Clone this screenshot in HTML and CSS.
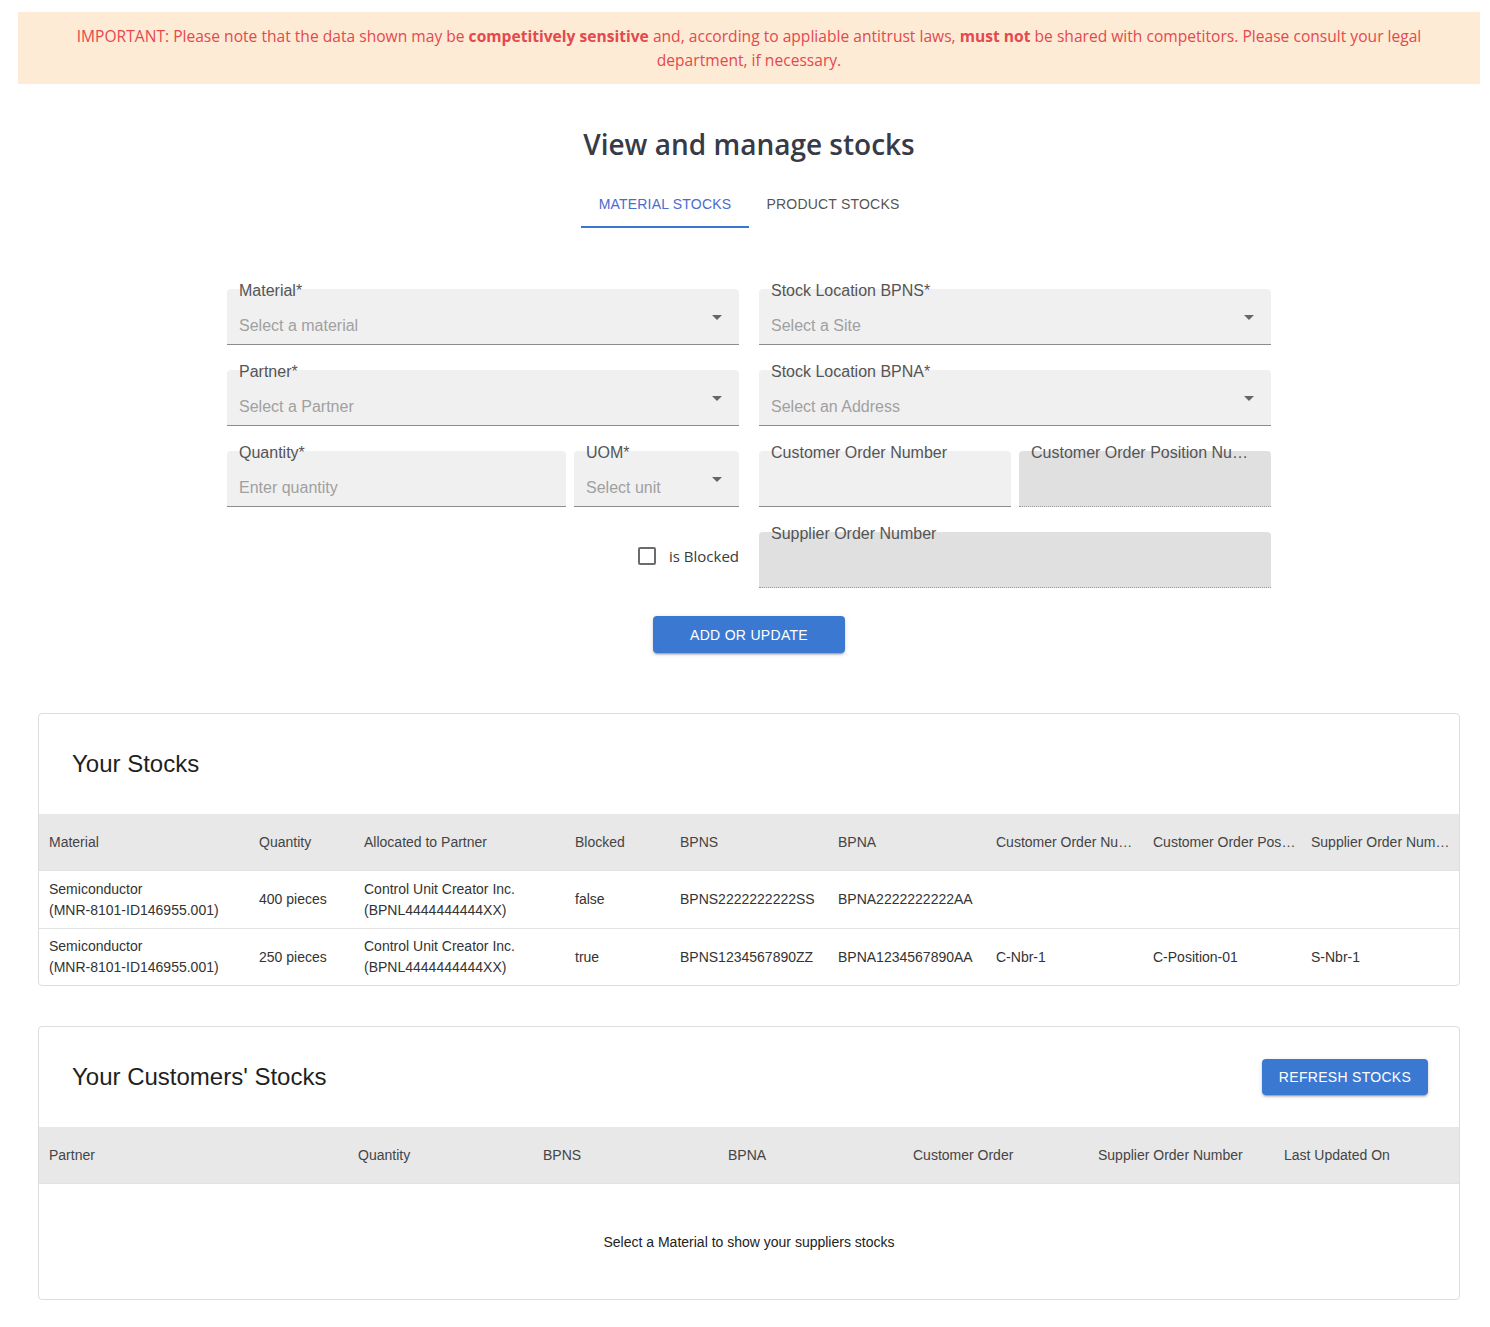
FILE: index.html
```html
<!DOCTYPE html>
<html lang="en">
<head>
<meta charset="utf-8">
<title>View and manage stocks</title>
<link rel="stylesheet" href="styles.css">
</head>
<body>
<div class="banner">IMPORTANT: Please note that the data shown may be <b>competitively sensitive</b> and, according to appliable antitrust laws, <b>must not</b> be shared with competitors. Please consult your legal department, if necessary.</div>

<main class="main">
  <h1 class="title">View and manage stocks</h1>
  <div class="tabs">
    <div class="tab active">MATERIAL STOCKS</div>
    <div class="tab">PRODUCT STOCKS</div>
  </div>

  <form class="form">
    <div class="col">
      <div class="field"><span class="label">Material*</span><span class="ph">Select a material</span><svg class="arrow" viewBox="0 0 24 24" width="24" height="24"><path d="M7 10l5 5 5-5z"/></svg></div>
      <div class="field"><span class="label">Partner*</span><span class="ph">Select a Partner</span><svg class="arrow" viewBox="0 0 24 24" width="24" height="24"><path d="M7 10l5 5 5-5z"/></svg></div>
      <div class="pair pair-qty">
        <div class="field"><span class="label">Quantity*</span><span class="ph">Enter quantity</span></div>
        <div class="field"><span class="label">UOM*</span><span class="ph">Select unit</span><svg class="arrow" viewBox="0 0 24 24" width="24" height="24"><path d="M7 10l5 5 5-5z"/></svg></div>
      </div>
      <div class="check-row"><span class="checkbox"></span><span class="check-label">is Blocked</span></div>
    </div>
    <div class="col">
      <div class="field"><span class="label">Stock Location BPNS*</span><span class="ph">Select a Site</span><svg class="arrow" viewBox="0 0 24 24" width="24" height="24"><path d="M7 10l5 5 5-5z"/></svg></div>
      <div class="field"><span class="label">Stock Location BPNA*</span><span class="ph">Select an Address</span><svg class="arrow" viewBox="0 0 24 24" width="24" height="24"><path d="M7 10l5 5 5-5z"/></svg></div>
      <div class="pair pair-order">
        <div class="field"><span class="label">Customer Order Number</span></div>
        <div class="field disabled"><span class="label">Customer Order Position Number</span></div>
      </div>
      <div class="field disabled"><span class="label">Supplier Order Number</span></div>
    </div>
  </form>

  <div class="actions"><button class="btn btn-add" type="button">ADD OR UPDATE</button></div>

  <section class="card">
    <div class="card-head"><h2 class="card-title">Your Stocks</h2></div>
    <div class="grid grid-stocks">
      <div class="row head">
        <div class="cell">Material</div>
        <div class="cell">Quantity</div>
        <div class="cell">Allocated to Partner</div>
        <div class="cell">Blocked</div>
        <div class="cell">BPNS</div>
        <div class="cell">BPNA</div>
        <div class="cell">Customer Order Number</div>
        <div class="cell">Customer Order Position</div>
        <div class="cell">Supplier Order Number</div>
      </div>
      <div class="row">
        <div class="cell"><span>Semiconductor</span><span>(MNR-8101-ID146955.001)</span></div>
        <div class="cell">400 pieces</div>
        <div class="cell"><span>Control Unit Creator Inc.</span><span>(BPNL4444444444XX)</span></div>
        <div class="cell">false</div>
        <div class="cell">BPNS2222222222SS</div>
        <div class="cell">BPNA2222222222AA</div>
        <div class="cell"></div>
        <div class="cell"></div>
        <div class="cell"></div>
      </div>
      <div class="row">
        <div class="cell"><span>Semiconductor</span><span>(MNR-8101-ID146955.001)</span></div>
        <div class="cell">250 pieces</div>
        <div class="cell"><span>Control Unit Creator Inc.</span><span>(BPNL4444444444XX)</span></div>
        <div class="cell">true</div>
        <div class="cell">BPNS1234567890ZZ</div>
        <div class="cell">BPNA1234567890AA</div>
        <div class="cell">C-Nbr-1</div>
        <div class="cell">C-Position-01</div>
        <div class="cell">S-Nbr-1</div>
      </div>
    </div>
  </section>

  <section class="card">
    <div class="card-head"><h2 class="card-title">Your Customers' Stocks</h2><button class="btn btn-refresh" type="button">REFRESH STOCKS</button></div>
    <div class="grid grid-customers">
      <div class="row head">
        <div class="cell">Partner</div>
        <div class="cell">Quantity</div>
        <div class="cell">BPNS</div>
        <div class="cell">BPNA</div>
        <div class="cell">Customer Order</div>
        <div class="cell">Supplier Order Number</div>
        <div class="cell">Last Updated On</div>
      </div>
      <div class="empty">Select a Material to show your suppliers stocks</div>
    </div>
  </section>
</main>
</body>
</html>
```

FILE: styles.css
```css
* { box-sizing: border-box; }

body {
  margin: 0;
  padding: 12px 10px 0 18px;
  font-family: "Liberation Sans", Arial, sans-serif;
  color: #222;
  background: #fff;
}

.banner {
  background: #fdebd6;
  color: #e5484d;
  font-family: "Open Sans", "Noto Sans", sans-serif;
  font-size: 15.6px;
  line-height: 24px;
  text-align: center;
  padding: 12px 40px;
}
.banner b { font-weight: 700; }

.main { display: flex; flex-direction: column; align-items: center; }

.title {
  margin: 40px 0 0;
  font-family: "Open Sans", "Noto Sans", sans-serif;
  font-weight: 600;
  font-size: 28px;
  line-height: 40px;
  color: #363b47;
}

.tabs { display: flex; margin-top: 16px; }
.tab {
  height: 48px;
  padding: 0 16px;
  display: flex;
  align-items: center;
  font-size: 14px;
  letter-spacing: 0.2px;
  color: #555;
  width: 168px;
  justify-content: center;
}
.tab.active { color: #4a6bd0; border-bottom: 2px solid #3a77d0; padding-top: 2px; }

.form {
  margin-top: 61px;
  width: 1044px;
  display: grid;
  grid-template-columns: 512px 512px;
  column-gap: 20px;
}
.col { display: flex; flex-direction: column; gap: 25px; }

.field {
  position: relative;
  height: 56px;
  background: #f0f0f0;
  border-radius: 4px 4px 0 0;
  border-bottom: 1px solid #8c8c8c;
  padding: 0 12px;
}
.field.disabled { background: #e0e0e0; border-bottom: 1px dotted #9a9a9a; }
.label {
  position: absolute;
  top: -8px;
  left: 12px;
  right: 20px;
  font-size: 16px;
  line-height: 20px;
  color: #555;
  white-space: nowrap;
  overflow: hidden;
  text-overflow: ellipsis;
}
.ph {
  display: block;
  padding-top: 27px;
  font-size: 16px;
  line-height: 20px;
  color: #a0a0a0;
}
.arrow { position: absolute; right: 10px; top: 16px; fill: #666; }

.pair { display: grid; column-gap: 8px; }
.pair-qty { grid-template-columns: 339px 165px; }
.pair-order { grid-template-columns: 252px 252px; }

.check-row {
  height: 56px;
  display: flex;
  justify-content: flex-end;
  align-items: flex-start;
  padding-top: 15px;
  gap: 13px;
}
.checkbox {
  width: 18px;
  height: 18px;
  border: 2px solid #6b6b6b;
  border-radius: 2px;
}
.check-label {
  font-family: "Open Sans", "Noto Sans", sans-serif;
  font-size: 15px;
  line-height: 18px;
  color: #3a3a3a;
}

.actions { margin-top: 28px; }
.btn {
  border: 0;
  border-radius: 4px;
  background: #3b78d1;
  color: #fff;
  font-family: "Liberation Sans", Arial, sans-serif;
  font-size: 14px;
  letter-spacing: 0.3px;
  box-shadow: 0 3px 1px -2px rgba(0,0,0,0.2), 0 2px 2px 0 rgba(0,0,0,0.14), 0 1px 5px 0 rgba(0,0,0,0.12);
}
.btn-add { width: 192px; height: 37px; }
.btn-refresh { width: 166px; height: 36px; }

.card {
  align-self: stretch;
  margin: 60px 20px 0;
  border: 1px solid #ddd;
  border-radius: 4px;
  overflow: hidden;
}
.card + .card { margin-top: 40px; }
.card-head {
  height: 100px;
  display: flex;
  align-items: center;
  justify-content: space-between;
  padding: 0 31px 0 33px;
}
.card-title {
  margin: 0;
  font-size: 24px;
  font-weight: 400;
  color: #1f1f1f;
}

.row { display: grid; border-top: 1px solid #e2e2e2; }
.row.head { background: #e8e8e8; height: 56px; border-top: 0; }
.grid-stocks .row { grid-template-columns: 210px 105px 211px 105px 158px 158px 157px 158px 1fr; }
.grid-stocks .row:not(.head) { height: 58px; }
.grid-stocks .row:last-child { height: 57px; }
.grid-customers .row { grid-template-columns: 309px 185px 185px 185px 185px 186px 1fr; }
.cell {
  padding: 0 8px 0 10px;
  display: flex;
  flex-direction: column;
  justify-content: center;
  font-size: 14px;
  line-height: 21px;
  color: #333;
  white-space: nowrap;
  min-width: 0;
  overflow: hidden;
}
.head .cell {
  display: block;
  line-height: 56px;
  color: #444;
  padding-right: 4px;
  text-overflow: ellipsis;
}
.empty {
  height: 116px;
  border-top: 1px solid #e2e2e2;
  display: flex;
  align-items: center;
  justify-content: center;
  font-size: 14px;
  color: #222;
}
```
